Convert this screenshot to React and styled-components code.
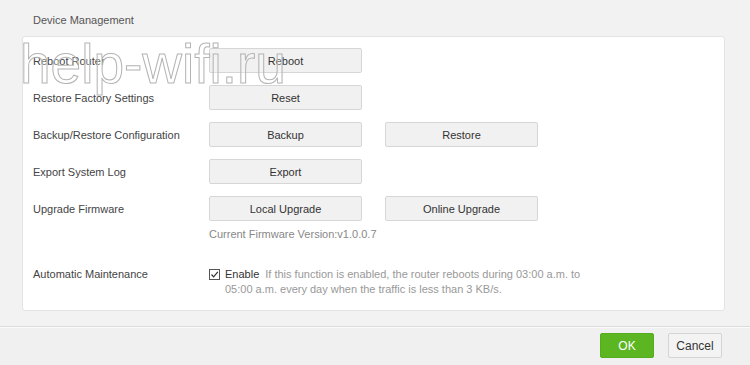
import React, { useState } from "react";
import styled, { createGlobalStyle } from "styled-components";

const GlobalStyle = createGlobalStyle`
  html, body {
    margin: 0;
    padding: 0;
    background: #f2f2f2;
  }
  body {
    font-family: "Liberation Sans", Arial, sans-serif;
    font-size: 11px;
    color: #444;
  }
`;

const rows = [
  { label: "Reboot Router", buttons: ["Reboot"] },
  { label: "Restore Factory Settings", buttons: ["Reset"] },
  { label: "Backup/Restore Configuration", buttons: ["Backup", "Restore"] },
  { label: "Export System Log", buttons: ["Export"] },
  { label: "Upgrade Firmware", buttons: ["Local Upgrade", "Online Upgrade"] },
];

const App = () => {
  const [auto, setAuto] = useState(true);

  return (
    <Page>
      <GlobalStyle />
      <Content>
        <Title>Device Management</Title>
        <Panel>
          {rows.map((row) => (
            <Row key={row.label}>
              <Label>{row.label}</Label>
              <Buttons>
                {row.buttons.map((b) => (
                  <GrayButton key={b}>{b}</GrayButton>
                ))}
              </Buttons>
            </Row>
          ))}
          <Version>Current Firmware Version:v1.0.0.7</Version>

          <MaintRow>
            <Label>Automatic Maintenance</Label>
            <MaintBody>
              <Check checked={auto} onClick={() => setAuto(!auto)}>
                {auto && (
                  <svg width="9" height="9" viewBox="0 0 9 9">
                    <path d="M1.5 4.5 L3.6 6.8 L7.8 1.8" fill="none" stroke="#333" strokeWidth="1.2" />
                  </svg>
                )}
              </Check>
              <Desc>
                <strong>Enable</strong>
                If this function is enabled, the router reboots during 03:00 a.m. to 05:00 a.m.
                every day when the traffic is less than 3 KB/s.
              </Desc>
            </MaintBody>
          </MaintRow>
        </Panel>
        <Watermark>help-wifi.ru</Watermark>
      </Content>

      <Footer>
        <OkButton>OK</OkButton>
        <CancelButton>Cancel</CancelButton>
      </Footer>
    </Page>
  );
};

// Styled Components
const Page = styled.div`
  width: 750px;
  height: 365px;
  overflow: hidden;
  display: flex;
  flex-direction: column;
  background: #f2f2f2;
`;

const Content = styled.div`
  position: relative;
  padding: 0 25px 0 22px;
  height: 327px;
  border-bottom: 1px solid #dcdcdc;
  box-sizing: border-box;
`;

const Title = styled.div`
  height: 36px;
  line-height: 40px;
  padding-left: 11px;
  color: #555;
`;

const Panel = styled.div`
  background: #fff;
  border: 1px solid #e4e4e4;
  border-radius: 3px;
  height: 275px;
  box-sizing: border-box;
  padding: 11px 10px 0;
  display: flex;
  flex-direction: column;
  gap: 12px;
`;

const Row = styled.div`
  display: flex;
  align-items: center;
  height: 25px;
`;

const Label = styled.div`
  width: 176px;
  flex: none;
  color: #444;
`;

const Buttons = styled.div`
  display: flex;
  gap: 23px;
`;

const GrayButton = styled.button`
  width: 153px;
  height: 25px;
  background: #f1f1f1;
  border: 1px solid #d6d6d6;
  border-radius: 2px;
  font-family: inherit;
  font-size: 11px;
  color: #333;
  padding: 0;
`;

const Version = styled.div`
  margin: -5px 0 0 176px;
  color: #888;
`;

const MaintRow = styled.div`
  display: flex;
  align-items: flex-start;
  margin-top: 15px;
  line-height: 15px;
`;

const MaintBody = styled.div`
  display: flex;
  align-items: flex-start;
  gap: 5px;
`;

const Check = styled.span`
  flex: none;
  width: 9px;
  height: 9px;
  margin-top: 2px;
  border: 1px solid #555;
  background: #fff;
  display: flex;
  align-items: center;
  justify-content: center;
  cursor: pointer;
`;

const Desc = styled.div`
  width: 360px;
  color: #999;

  strong {
    font-weight: normal;
    color: #333;
    margin-right: 6px;
  }
`;

const Watermark = styled.div`
  position: absolute;
  left: 20px;
  top: 32px;
  font-family: "Liberation Sans", Arial, sans-serif;
  font-size: 55px;
  line-height: 64px;
  color: rgba(255, 255, 255, 0.25);
  -webkit-text-stroke: 1px #b4b4b4;
  pointer-events: none;
`;

const Footer = styled.div`
  flex: 1;
  display: flex;
  justify-content: flex-end;
  align-items: center;
  gap: 14px;
  padding: 0 28px 2px 0;
  background: #f0f0f0;
  border-top: 1px solid #fafafa;
`;

const OkButton = styled.button`
  width: 54px;
  height: 25px;
  background: #5bb621;
  border: 1px solid #54ad1c;
  border-radius: 2px;
  color: #fff;
  font-family: inherit;
  font-size: 12px;
  padding: 0;
`;

const CancelButton = styled(OkButton)`
  background: #f3f3f3;
  border-color: #d4d4d4;
  color: #333;
`;

export default App;
